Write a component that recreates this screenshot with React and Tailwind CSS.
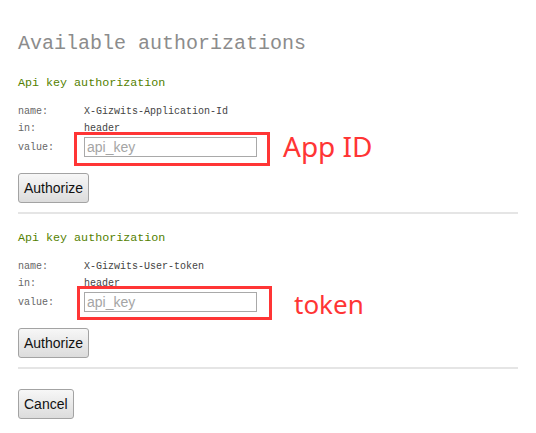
import React from 'react';

const mono = { fontFamily: '"Liberation Mono", "DejaVu Sans Mono", monospace' };

const Field = ({ label, children }) => (
    <div className="flex items-center">
        <span className="w-[66px] shrink-0 text-[10px] text-[#666]">{label}</span>
        {children}
    </div>
);

const Button = ({ children }) => (
    <button
        className="h-[30px] px-[5px] rounded-[3px] border border-[#a3a3a3] bg-gradient-to-b from-[#f7f7f7] to-[#dcdcdc] text-[14px] text-[#111] font-['Liberation_Sans',Arial,sans-serif]"
    >
        {children}
    </button>
);

const AuthSection = ({ header, note, box, noteClass }) => (
    <div>
        <h4 className="h-4 leading-4 text-[11.7px] text-[#547f00]">Api key authorization</h4>
        <div className="mt-[12px]">
            <Field label="name:">
                <span className="text-[10px] leading-[17px] text-[#444]">{header}</span>
            </Field>
            <Field label="in:">
                <span className="text-[10px] leading-[17px] text-[#444]">header</span>
            </Field>
            <Field label="value:">
                <div className="relative">
                    <input
                        placeholder="api_key"
                        className="block w-[173px] h-[20px] border border-[#a9a9a9] px-[2px] text-[14px] placeholder:text-[#a5a5a5] font-['Liberation_Sans',Arial,sans-serif] outline-none"
                    />
                    {/* red annotation */}
                    <div className={`absolute border-[3px] border-[#ff3535] pointer-events-none ${box}`} />
                    <span className={`absolute whitespace-nowrap text-[#ff3535] font-['Noto_Sans',sans-serif] ${noteClass}`}>
                        {note}
                    </span>
                </div>
            </Field>
        </div>
        <div className="mt-[16px]">
            <Button>Authorize</Button>
        </div>
        <div className="mt-[9px] h-[2px] bg-[#e5e5e5]" />
    </div>
);

export default function App() {
    return (
        <div className="w-[536px] h-[433px] bg-white px-[18px] pt-[30px] overflow-hidden" style={mono}>
            <h2 className="h-[28px] leading-[28px] text-[20px] text-[#8c8c8c]">Available authorizations</h2>
            <div className="mt-[17px]">
                <AuthSection
                    header="X-Gizwits-Application-Id"
                    note="App ID"
                    box="-left-[10px] -right-[13px] -top-[5px] -bottom-[9px]"
                    noteClass="left-[199px] -top-[10px] text-[28px] leading-[38px]"
                />
            </div>
            <div className="mt-[16px]">
                <AuthSection
                    header="X-Gizwits-User-token"
                    note="token"
                    box="-left-[7px] -right-[15px] -top-[6px] -bottom-[8px]"
                    noteClass="left-[210px] -top-[6px] text-[26px] leading-[36px]"
                />
            </div>
            <div className="mt-[20px]">
                <Button>Cancel</Button>
            </div>
        </div>
    );
}
